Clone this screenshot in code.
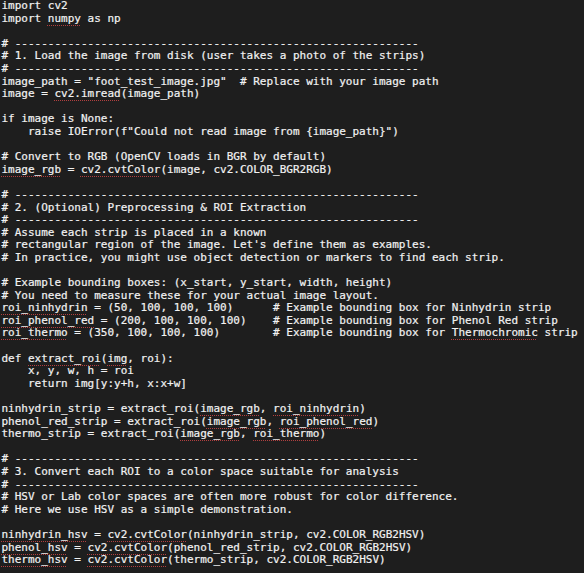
import React from "react";

// words the editor flags with a red dotted squiggle are wrapped in [[ ]]
const code = [
  "import cv2",
  "import [[numpy]] as np",
  "",
  "# -------------------------------------------------------------",
  "# 1. Load the image from disk (user takes a photo of the strips)",
  "# -------------------------------------------------------------",
  'image_path = "foot_test_image.jpg"  # Replace with your image path',
  "image = [[cv2.imread]](image_path)",
  "",
  "if image is None:",
  '    raise IOError(f"Could not read image from {image_path}")',
  "",
  "# Convert to RGB (OpenCV loads in BGR by default)",
  "[[image_rgb]] = [[cv2.cvtColor]](image, cv2.COLOR_BGR2RGB)",
  "",
  "# -------------------------------------------------------------",
  "# 2. (Optional) Preprocessing & ROI Extraction",
  "# -------------------------------------------------------------",
  "# Assume each strip is placed in a known",
  "# rectangular region of the image. Let's define them as examples.",
  "# In practice, you might use object detection or markers to find each strip.",
  "",
  "# Example bounding boxes: (x_start, y_start, width, height)",
  "# You need to measure these for your actual image layout.",
  "[[roi_ninhydrin]] = (50, 100, 100, 100)      # Example bounding box for Ninhydrin strip",
  "[[roi_phenol_red]] = (200, 100, 100, 100)    # Example bounding box for Phenol Red strip",
  "[[roi_thermo]] = (350, 100, 100, 100)        # Example bounding box for [[Thermochromic]] strip",
  "",
  "def [[extract_roi]]([[img]], roi):",
  "    x, y, w, h = roi",
  "    return img[y:y+h, x:x+w]",
  "",
  "ninhydrin_strip = extract_roi([[image_rgb]], [[roi_ninhydrin]])",
  "phenol_red_strip = extract_roi([[image_rgb]], [[roi_phenol_red]])",
  "thermo_strip = extract_roi([[image_rgb]], [[roi_thermo]])",
  "",
  "# -------------------------------------------------------------",
  "# 3. Convert each ROI to a color space suitable for analysis",
  "# -------------------------------------------------------------",
  "# HSV or Lab color spaces are often more robust for color difference.",
  "# Here we use HSV as a simple demonstration.",
  "",
  "[[ninhydrin_hsv]] = [[cv2.cvtColor]](ninhydrin_strip, cv2.COLOR_RGB2HSV)",
  "[[phenol_hsv]] = [[cv2.cvtColor]](phenol_red_strip, cv2.COLOR_RGB2HSV)",
  "[[thermo_hsv]] = [[cv2.cvtColor]](thermo_strip, cv2.COLOR_RGB2HSV)",
];

const Line = ({ text }) => {
  const parts = text.split(/(\[\[.*?\]\])/);
  return (
    <div className="h-[12.6px] whitespace-pre">
      {text === "" ? " " : parts.map((p, i) =>
        p.startsWith("[[") ? (
          <span
            key={i}
            className="underline decoration-dotted decoration-[#b13f3f] decoration-1 underline-offset-[3px]"
          >
            {p.slice(2, -2)}
          </span>
        ) : (
          <span key={i}>{p}</span>
        )
      )}
    </div>
  );
};

const App = () => {
  return (
    <div className="w-[584px] h-[573px] overflow-hidden bg-[#1e1e1e] text-[#f2f2f2] pl-[1.5px] text-[11px] leading-[12.6px] font-['DejaVu_Sans_Mono',monospace] [-webkit-text-stroke:0.2px_#f2f2f2]">
      {code.map((l, i) => (
        <Line key={i} text={l} />
      ))}
    </div>
  );
};

export default App;
